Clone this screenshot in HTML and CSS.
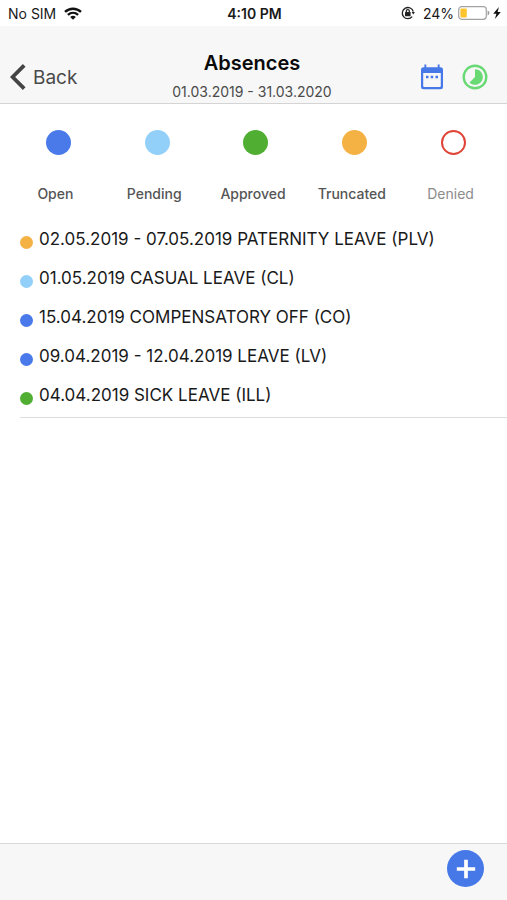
FILE: index.html
```html
<!DOCTYPE html>
<html lang="en">
<head>
<meta charset="utf-8">
<meta name="viewport" content="width=device-width, initial-scale=1">
<title>Absences</title>
<link rel="stylesheet" href="styles.css">
</head>
<body>
<div class="status">
  <div class="status-left">
    <span>No SIM</span>
    <svg width="18" height="13" viewBox="0 0 18 13" fill="none" stroke="#111" stroke-width="2.4" aria-hidden="true">
      <path d="M1 4.9C5.6.6 12.4.6 17 4.9"/><path d="M3.9 7.9c3-2.7 7.2-2.7 10.2 0"/><path d="M9 12.7 6.2 9.9c1.6-1.4 4-1.4 5.6 0z" fill="#111" stroke="none"/>
    </svg>
  </div>
  <span class="time">4:10 PM</span>
  <div class="status-right">
    <svg width="14" height="14" viewBox="0 0 14 14" fill="none" stroke="#222" aria-hidden="true">
      <path d="M12.3 5.6A5.6 5.6 0 1 0 11.2 10.7" stroke-width="1.3"/><path d="M10.6 6h3.3l-1.6 2.5z" fill="#222" stroke="none"/>
      <rect x="4" y="6" width="5.600" height="4.200" rx=".5" fill="#222" stroke="none"/><path d="M5.3 6.5V5.1a1.5 1.5 0 0 1 3 0v1.4" stroke-width="1.2"/>
    </svg>
    <span class="percent">24%</span>
    <svg width="32" height="14" viewBox="0 0 32 14" aria-hidden="true">
      <rect x=".7" y=".7" width="27.6" height="12.6" rx="3" fill="#fff" stroke="#a2a2a2" stroke-width="1.2"/><rect x="2.4" y="2.4" width="6.4" height="9.2" rx="1" fill="#fdc42e"/><path d="M29.6 4.6c2.4.8 2.4 4 0 4.8z" fill="#999"/>
    </svg>
    <svg class="bolt" width="8" height="12" viewBox="0 0 8 12" aria-hidden="true"><path d="M5.9 0 .2 6.8h3.2L1.9 12 7.8 4.9H4.6z" fill="#111"/></svg>
  </div>
</div>
<header class="header">
  <button class="back" type="button">
    <svg width="16" height="26" viewBox="0 0 16 26" fill="none" stroke="#444" stroke-width="3.8" aria-hidden="true"><path d="M14.2 1.4 2.600 13l11.600 11.6"/></svg>
    <span>Back</span>
  </button>
  <div class="heading">
    <h1>Absences</h1>
    <p>01.03.2019 - 31.03.2020</p>
  </div>
  <div class="actions">
    <button type="button" aria-label="Calendar">
      <svg width="24" height="26" viewBox="0 0 24 26" aria-hidden="true">
        <path fill="#4678e8" fill-rule="evenodd" d="M4.400.5h1.900v2.700h11.400V.5h1.900v2.700h.9a2.500 2.500 0 0 1 2.500 2.500v17a2.500 2.500 0 0 1-2.500 2.500h-17A2.500 2.500 0 0 1 1 22.700V5.700a2.500 2.500 0 0 1 2.500-2.500h.9zM3.200 9v13a1 1 0 0 0 1 1h15.600a1 1 0 0 0 1-1V9z"/>
        <path fill="#4678e8" d="M6 11.700h2.500v2.500H6zM10.700 11.700h2.500v2.500h-2.500zM15.500 11.700H18v2.500h-2.500z"/>
      </svg>
    </button>
    <button type="button" aria-label="Time balance">
      <svg width="26" height="26" viewBox="0 0 26 26" aria-hidden="true"><circle cx="13" cy="13" r="11.300" fill="none" stroke="#68d973" stroke-width="2.400"/><path d="M13 5.200A7.800 7.800 0 1 1 7.500 18.500L13 13z" fill="#68d973"/></svg>
    </button>
  </div>
</header>
<main>
  <ul class="legend">
    <li><i class="dot open"></i><span>Open</span></li>
    <li><i class="dot pending"></i><span>Pending</span></li>
    <li><i class="dot approved"></i><span>Approved</span></li>
    <li><i class="dot truncated"></i><span>Truncated</span></li>
    <li class="off"><i class="dot denied"></i><span>Denied</span></li>
  </ul>
  <ul class="list">
    <li><i class="dot truncated"></i><span>02.05.2019 - 07.05.2019 PATERNITY LEAVE (PLV)</span></li>
    <li><i class="dot pending"></i><span>01.05.2019 CASUAL LEAVE (CL)</span></li>
    <li><i class="dot open"></i><span>15.04.2019 COMPENSATORY OFF (CO)</span></li>
    <li><i class="dot open"></i><span>09.04.2019 - 12.04.2019 LEAVE (LV)</span></li>
    <li><i class="dot approved"></i><span>04.04.2019 SICK LEAVE (ILL)</span></li>
  </ul>
</main>
<footer class="footer">
  <button class="add" type="button" aria-label="Add absence">
    <svg width="20" height="20" viewBox="0 0 20 20" stroke="#fff" stroke-width="3.700" aria-hidden="true"><path d="M10 .8v18.400M.8 10h18.400"/></svg>
  </button>
</footer>
</body>
</html>
```
FILE: styles.css
```css
* { box-sizing: border-box; }
body {
  margin: 0;
  min-height: 100vh;
  display: flex;
  flex-direction: column;
  background: #fff;
  color: #1a1a1a;
  font-family: Inter, "Liberation Sans", sans-serif;
}
h1, p, ul { margin: 0; padding: 0; }
ul { list-style: none; }
svg { display: block; flex: none; }
button {
  border: 0;
  padding: 0;
  background: none;
  color: inherit;
  font: inherit;
}

.status {
  display: grid;
  grid-template-columns: 1fr auto 1fr;
  align-items: center;
  height: 26px;
  padding: 0 6px 0 8px;
  font-size: 14px;
}
.status-left, .status-right { display: flex; align-items: center; }
.status-left { gap: 8px; }
.status-right { justify-content: flex-end; }
.time { font-weight: 600; }
.percent { margin: 0 4px 0 8px; }
.bolt { margin-left: 3px; }

.header {
  display: grid;
  grid-template-columns: 1fr auto 1fr;
  align-items: center;
  height: 78px;
  padding: 22px 19px 0 10px;
  background: #f7f7f7;
  border-bottom: 1px solid #d4d4d4;
}
.back {
  display: flex;
  align-items: center;
  gap: 7px;
  color: #4a4a4a;
  font-size: 19px;
}
.heading { padding-left: 6px; text-align: center; }
.heading h1 {
  font-size: 20px;
  line-height: 30px;
  font-weight: 600;
  color: #0a0a0a;
}
.heading p {
  font-size: 14px;
  line-height: 28px;
  color: #4a4a4a;
}
.actions {
  display: flex;
  justify-content: flex-end;
  gap: 18px;
}

main { flex: 1; }
.dot { flex: none; border-radius: 50%; }
.open { background: #4a7aea; }
.pending { background: #92d0fa; }
.approved { background: #50ae33; }
.truncated { background: #f4b244; }
.denied { border: 2px solid #e04436; }

.legend {
  display: grid;
  grid-template-columns: repeat(5, 1fr);
  padding: 26px 4px 0 9px;
}
.legend li {
  display: flex;
  flex-direction: column;
  align-items: center;
  gap: 29px;
  font-size: 14px;
  line-height: 20px;
  font-weight: 500;
  color: #555;
}
.legend .dot { width: 25px; height: 25px; }
.legend span { padding-right: 6px; }
.legend .off { font-weight: 400; color: #8c8c8c; }

.list {
  margin: 15px 0 0 20px;
  padding-bottom: 3px;
  border-bottom: 1px solid #ddd;
}
.list li {
  display: flex;
  align-items: center;
  gap: 6px;
  min-height: 39px;
  font-size: 17px;
  line-height: 20px;
}
.list .dot { width: 13px; height: 13px; margin-top: 8px; }

.footer {
  display: flex;
  justify-content: flex-end;
  align-items: flex-start;
  height: 57px;
  padding: 6px 23px 0;
  background: #f7f7f7;
  border-top: 1px solid #d8d8d8;
}
.add {
  display: grid;
  place-items: center;
  width: 37px;
  height: 37px;
  border-radius: 50%;
  background: #4678e8;
}
```
